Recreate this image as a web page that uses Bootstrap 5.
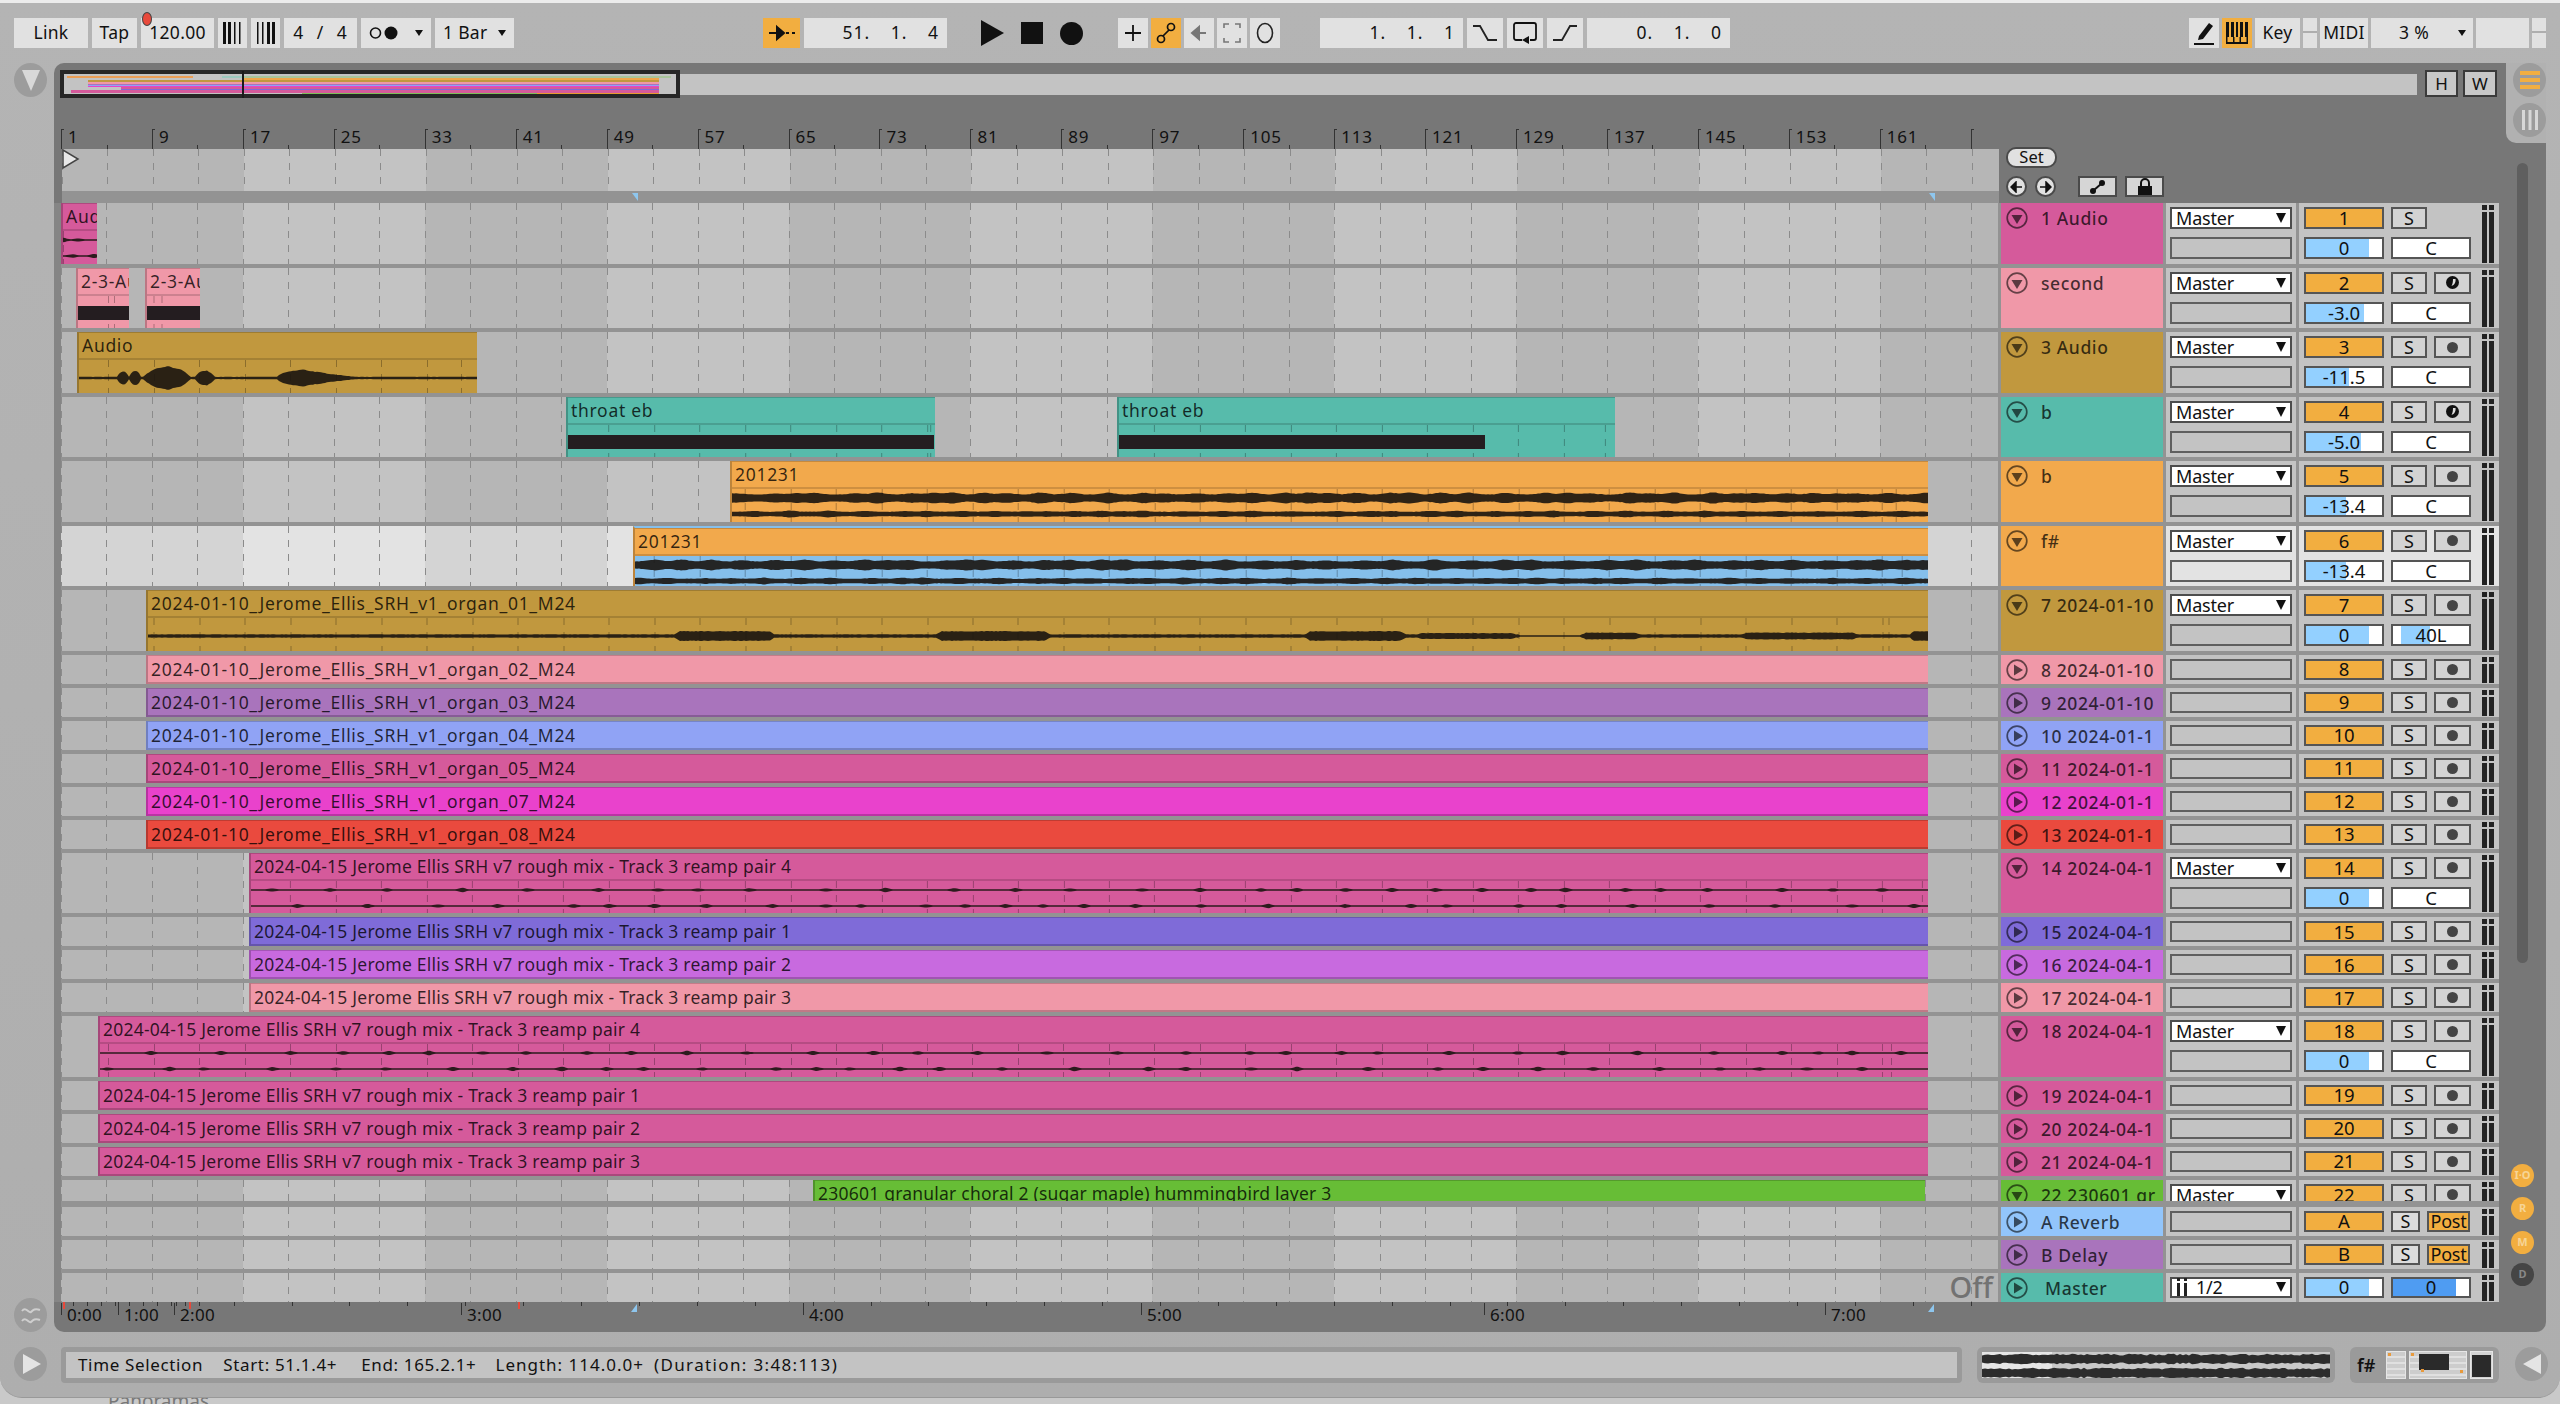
<!DOCTYPE html>
<html lang="en">
<head>
<meta charset="UTF-8">
<title>Ableton Live - Arrangement</title>
<link href="https://cdn.jsdelivr.net/npm/bootstrap@5.3.0/dist/css/bootstrap.min.css" rel="stylesheet">
<style>
:root { --orange:#f2ae40; --lane-d:#b6b6b6; --lane-l:#c3c3c3; --sep:#939393; --panel:#777; --edge:#5a5a5a; }
html, body { margin:0; background:#c9c9c9; }
body { width:2560px; height:1404px; overflow:hidden; font-family:"Noto Sans","Liberation Sans",sans-serif; font-size:16px; color:#111; }
.live-win { width:2560px; height:1398px; background:linear-gradient(#b4b4b4,#aeaeae); border-top:3px solid #ececec; border-radius:0 0 22px 22px; border-bottom:1px solid #999; }
.under-win { height:6px; overflow:hidden; padding-left:108px; color:#777; font-size:19px; line-height:6px; }

/* toolbar */
.tool-row { height:60px; padding:15px 14px 0; gap:4px; }
.tb { height:30px; background:#e1e1e1; font-size:17.5px; letter-spacing:.3px; line-height:1; white-space:nowrap; }
.tb.on { background:var(--orange); }
.tb-bare { height:30px; }
.w14{width:14px}.w29{width:29px}.w30{width:30px}.w36{width:36px}.w37{width:37px}.w45{width:45px}.w48{width:48px}.w53{width:53px}.w70{width:70px}.w73{width:73px}.w74{width:74px}.w79{width:79px}.w102{width:102px}.w143{width:143px}
.gap-t3 { gap:3px; }
.gap-t17 { gap:17px; }
.mono-pos { word-spacing:15px; letter-spacing:1px; }
.mono-pos.tight { word-spacing:7px; }
.pos-r { justify-content:flex-end; padding-right:8px; }
.pct-sel { padding:0 7px 0 28px; }
.split-v { background:linear-gradient(#e1e1e1 0 13px,#aeaeae 13px 15px,#e1e1e1 15px); }
.ml-follow { margin-left:245px; }
.ml-play { margin-left:30px; }
.ml-edit { margin-left:31px; }
.ml-loop { margin-left:36px; }
.tempo-dot { position:absolute; left:1px; top:-6px; width:10px; height:14px; border-radius:50%; background:#e8493b; border:1px solid #444; }
.caret-dn { width:0; height:0; border-left:4px solid transparent; border-right:4px solid transparent; border-top:6px solid #111; }

/* main */
.main-row { height:1269px; }
.side-left { width:54px; padding-left:14px; flex:none; }
.round-tog { width:33px; height:34px; border-radius:50%; background:#9c9c9c; }
.arr-panel { width:2492px; height:1269px; background:var(--panel); border-radius:10px 0 10px 10px; position:relative; overflow:hidden; }
.notch { position:absolute; right:0; top:0; width:40px; height:80px; background:#b1b1b1; border-bottom-left-radius:10px; z-index:3; }
.notch-btn { position:absolute; left:7px; }
.notch-btn.a { top:0; } .notch-btn.b { top:40px; }
.scroll-tr { position:absolute; left:2463px; top:100px; width:11px; height:800px; background:#5f5f5f; border-radius:6px; }
.ovw { margin:11px 0 0 7px; width:2356px; height:21px; background:var(--lane-l); position:relative; }
.ovw-frame { position:absolute; left:-1px; top:-4px; width:620px; height:28px; border:4px solid #262626; }
.ovw-cursor { position:absolute; left:181px; top:-3px; width:2px; height:27px; background:#1a1a1a; }
.zoom-tog { position:absolute; top:7px; height:27px; border:2px solid #3a3a3a; background:#c8c8c8; font-size:17px; }
.tg-h { left:2371px; width:33px; } .tg-w { left:2409px; width:34px; }

.rul-top { margin:0 0 0 7px; width:1937px; height:54px; overflow:hidden; }
.bar-cell { width:90.95px; flex:none; height:24px; position:relative; padding-left:7px; font-size:17px; letter-spacing:.8px; line-height:24px; color:#111; }
.bar-cell::before { content:""; position:absolute; left:0; top:4px; height:20px; width:3px; border-left:1px solid #333; border-top:1px solid #333; }
.bar-cell::after { content:""; position:absolute; left:45.5px; top:20px; height:4px; border-left:1px solid #333; }

.head-band { height:54px; }
.lane { width:1937px; flex:none; position:relative; overflow:hidden; background:repeating-linear-gradient(90deg,var(--lane-d) 0 181.9px,var(--lane-l) 181.9px 363.8px); }
.lane.sel { background:repeating-linear-gradient(90deg,#d4d4d4 0 181.9px,#e3e3e3 181.9px 363.8px); }
.lane::before, .clip-body::before { content:""; position:absolute; inset:0; background:repeating-linear-gradient(90deg,#8b8b8b 0 1px,transparent 1px 45.475px); -webkit-mask-image:repeating-linear-gradient(180deg,#000 0 7px,transparent 7px 14px); mask-image:repeating-linear-gradient(180deg,#000 0 7px,transparent 7px 14px); }
.clip-body::before { background:repeating-linear-gradient(90deg,rgba(0,0,0,.28) 0 1px,transparent 1px 45.475px); background-position-x:var(--grid-x); }
.marker-lane { height:42px; }
.start-arrow { position:absolute; left:0; top:0; }
.strip { width:1937px; height:12px; background:var(--sep); position:relative; }
.blue-tri { position:absolute; width:0; height:0; border-top:8px solid #8ec6ee; border-left:6px solid transparent; }
.blue-tri.up { border-top:0; border-bottom:8px solid #8ec6ee; }
.set-col { margin-left:7px; width:158px; }
.set-btn { width:51px; height:21px; border-radius:10px; background:#e1e1e1; border:2px solid #4a4a4a; font-size:16.5px; line-height:1; margin-top:-2px; }
.nav-dot { width:21px; height:21px; border-radius:50%; background:#e1e1e1; border:2px solid #4a4a4a; }
.sq-btn { width:39px; height:21px; background:#d6d6d6; border:2px solid #4a4a4a; }

.trk-wrap { border-left:7px solid #858585; width:2445px; background:var(--sep); }
.trk-scroll { height:998px; overflow:hidden; }
.trk { gap:3px; margin-bottom:4px; }
.trk.tall { height:60.5px; }
.trk.small { height:29px; }
.trk-last { margin-bottom:0; }
.trk-sep { height:5px; margin-bottom:.5px; }
.trk-head { width:162px; flex:none; padding:4px 0 0 5px; gap:13px; color:rgba(0,0,0,.72); font-size:17.5px; letter-spacing:.6px; font-weight:500; line-height:22px; white-space:nowrap; overflow:hidden; }
.trk-head.master-nm span { padding-left:4px; }
.fold { width:22px; height:22px; flex:none; display:block; }
.trk-route { width:130px; flex:none; background:var(--lane-l); padding:4px; gap:8px; }
.trk-route.sel, .trk-mix.sel { background:#e3e3e3; }
.sel-box { height:22px; flex:none; border:2px solid #5f5f5f; }
.small .sel-box { height:21px; }
.sel-box.white { background:#fff; border-color:#4d4d4d; padding:0 4px; font-size:18px; letter-spacing:-.2px; line-height:16px; }
.caret-sel { width:0; height:0; border-left:5px solid transparent; border-right:5px solid transparent; border-top:10px solid #111; }
.trk-mix { width:200px; flex:none; background:var(--lane-l); padding:4px 5px 0; }
.mix-col { gap:8px; flex:none; width:167px; }
.mix-line { gap:7px; height:22px; }
.small .mix-line { height:21px; }
.num-btn { width:80px; background:var(--orange); border:2px solid #555; font-size:18.5px; line-height:16px; }
.s-btn { width:36px; background:#d3d3d3; border:2px solid #555; font-size:18px; line-height:16px; }
.s-btn.nar { width:29px; background:#dcdcdc; }
.rec-btn { width:37px; background:#d3d3d3; border:2px solid #555; }
.rec-btn.post { width:43px; background:var(--orange); font-size:18px; letter-spacing:-.2px; line-height:16px; }
.rec-dot { width:11px; height:11px; border-radius:50%; background:#444; }
.val-box { width:80px; background:#fff; border:2px solid #555; font-size:18.5px; line-height:16px; position:relative; }
.val-fill { position:absolute; top:0; bottom:0; left:0; background:#93d0ff; }
.val-fill.deep { background:#4f9cf2; }
.val-txt { position:relative; }
.mtr { width:12px; flex:none; gap:2px; margin-left:11px; margin-top:-2px; height:calc(100% + 1px); }
.mtr-ch { width:5px; gap:2px; }
.mtr-a { height:5px; background:#222; }
.mtr-b { flex:1; background:#222; }

/* clips */
.clip { position:absolute; top:0; bottom:0; border-left:2px solid rgba(0,0,0,.22); box-shadow:inset 0 1px rgba(0,0,0,.18); z-index:1; overflow:hidden; }
.clip.blue-top { border-top:2px solid #85bfeb; }
.clip-title { height:28px; padding-left:3px; font-size:17.5px; letter-spacing:.7px; line-height:27px; color:rgba(0,0,0,.78); white-space:nowrap; overflow:hidden; border-bottom:2px solid rgba(0,0,0,.15); }
.clip-title.narrow { letter-spacing:.22px; }
.small .clip-title { height:29px; line-height:28px; border-bottom:2px solid rgba(0,0,0,.2); }
.clip-body { position:absolute; left:0; right:0; top:28px; bottom:0; }
.clip-svg { position:absolute; left:0; top:0; display:block; }
.clip-bar { position:absolute; left:0; top:10px; height:14px; }
.off-lbl { position:absolute; right:5px; bottom:1px; font-size:29px; line-height:1; color:#727272; z-index:2; font-weight:500; }

.rul-bot { height:30px; margin-left:7px; width:1937px; position:relative; overflow:hidden; background:repeating-linear-gradient(90deg,transparent 0 56.9px,#333 56.9px 57.9px) 0 0/100% 4px no-repeat; }
.tm { position:absolute; top:1px; font-size:17px; letter-spacing:.3px; line-height:1; padding:3px 0 0 6px; }
.tm::before { content:""; position:absolute; left:0; top:0; height:12px; border-left:1px solid #333; }
.red-tick { position:absolute; top:0; width:2px; height:7px; background:#e8493b; }
.mini-tick { position:absolute; top:0; width:1px; height:4px; background:#333; }
.ctl { position:absolute; width:23px; height:23px; border-radius:50%; background:var(--orange); color:#f7d596; font-size:11px; font-weight:700; z-index:4; left:2457px; }
.ctl.off { background:#454545; color:#888; }

/* status */
.stat-row { height:36px; margin-top:15px; position:relative; }
.stat-box { width:1901px; height:36px; border:5px solid #9a9a9a; border-radius:4px; background:var(--lane-l); padding-left:12px; font-size:17px; letter-spacing:.65px; margin-left:7px; white-space:nowrap; }
.st-a { margin-right:20px; } .st-b { margin-right:24px; } .st-c { margin-right:19px; } .st-d { margin-right:10px; letter-spacing:1px; } .st-e { letter-spacing:1.35px; }
.prev-box { width:358px; height:36px; margin-left:15px; background:#9a9a9a; border-radius:6px; padding:5px; }
.prev-in { width:348px; height:26px; background:linear-gradient(90deg,#e6e6e6 0 70px,#c9c9c9 70px); display:block; }
.dev-box { width:149px; height:36px; margin-left:15px; background:#9a9a9a; border-radius:6px; padding:4px 6px 4px 7px; gap:3px; font-size:18px; font-weight:600; }
.dev-nm { width:23px; margin-right:4px; }
.dev-thumb { height:28px; background:repeating-linear-gradient(#cdcdcd 0 4px,#e0e0e0 4px 6px); border:1px solid #e6e6e6; position:relative; }
.dev-thumb.a { width:21px; } .dev-thumb.b { width:62px; } .dev-thumb.c { width:24px; background:#d4d4d4; }
.dev-scr { position:absolute; background:#2a2a2a; }
.dev-scr.b1 { left:9px; width:30px; top:2px; bottom:8px; }
.dev-scr.c1 { left:1px; right:1px; top:3px; bottom:1px; }
.dev-dot { position:absolute; width:3px; height:3px; background:#e89a3c; }
.dev-dot.p1 { left:1px; top:1px; } .dev-dot.p2 { left:11px; top:17px; } .dev-dot.p3 { right:3px; top:18px; }
</style>
</head>
<body>
<div class="live-win d-flex flex-column">

  <div class="tool-row d-flex align-items-start">
    <div class="tb w74 d-flex align-items-center justify-content-center">Link</div>
    <div class="tb w45 d-flex align-items-center justify-content-center">Tap</div>
    <div class="tb w73 d-flex align-items-center justify-content-center position-relative"><span class="tempo-dot"></span>120.00</div>
    <div class="tb w29 d-flex align-items-center justify-content-center"><svg width="22" height="24"><path d="M1 1h3v22H1zM6 1h3v22H6z" fill="#111"/><path d="M12 1h1.500v22H12zM17 1h1.500v22H17z" fill="#111"/></svg></div>
    <div class="tb w29 d-flex align-items-center justify-content-center"><svg width="22" height="24"><path d="M2 1h1.500v22H2zM7 1h1.500v22H7z" fill="#111"/><path d="M12 1h3v22h-3zM17 1h3v22h-3z" fill="#111"/></svg></div>
    <div class="tb w73 d-flex align-items-center justify-content-center mono-pos tight">4 / 4</div>
    <div class="tb w70 d-flex align-items-center justify-content-between px-2"><svg width="30" height="18"><circle cx="6.500" cy="9" r="5" fill="none" stroke="#111" stroke-width="1.600"/><circle cx="22" cy="9" r="6.500" fill="#111"/></svg><span class="caret-dn"></span></div>
    <div class="tb w79 d-flex align-items-center justify-content-between px-2">1 Bar<span class="caret-dn"></span></div>

    <div class="tb on w37 d-flex align-items-center justify-content-center ml-follow"><svg width="28" height="18"><path d="M1 9h11M9 3l7 6-7 6z" stroke="#111" stroke-width="2" fill="#111"/><path d="M18 9h3M24 9h3" stroke="#111" stroke-width="2"/></svg></div>
    <div class="tb w143 d-flex align-items-center pos-r mono-pos">51. 1. 4</div>

    <div class="tb-bare d-flex align-items-center gap-t17 ml-play">
      <svg width="23" height="26"><path d="M0 0l23 13L0 26z" fill="#111"/></svg>
      <svg width="22" height="22"><rect width="22" height="22" fill="#111"/></svg>
      <svg width="23" height="23"><circle cx="11.500" cy="11.500" r="11.500" fill="#111"/></svg>
    </div>

    <div class="d-flex gap-t3 ml-edit">
      <div class="tb w30 d-flex align-items-center justify-content-center"><svg width="18" height="18"><path d="M9 1v16M1 9h16" stroke="#111" stroke-width="1.800"/></svg></div>
      <div class="tb on w30 d-flex align-items-center justify-content-center"><svg width="20" height="24"><circle cx="5" cy="18" r="3.500" fill="none" stroke="#111" stroke-width="1.700"/><circle cx="15" cy="6" r="3.500" fill="none" stroke="#111" stroke-width="1.700"/><path d="M7 15l6-6" stroke="#111" stroke-width="1.700"/></svg></div>
      <div class="tb w30 d-flex align-items-center justify-content-center"><svg width="18" height="18"><path d="M16 9H7M9 3L2 9l7 6z" stroke="#777" stroke-width="2" fill="#777"/></svg></div>
      <div class="tb w30 d-flex align-items-center justify-content-center"><svg width="18" height="20"><path d="M1 5V1h5M12 1h5v4M17 15v4h-5M6 19H1v-4" fill="none" stroke="#777" stroke-width="1.600"/></svg></div>
      <div class="tb w30 d-flex align-items-center justify-content-center"><svg width="18" height="22"><ellipse cx="9" cy="11" rx="7.500" ry="9.500" fill="none" stroke="#222" stroke-width="1.600"/></svg></div>
    </div>

    <div class="tb w143 d-flex align-items-center pos-r mono-pos ml-loop">1. 1. 1</div>
    <div class="tb w36 d-flex align-items-center justify-content-center"><svg width="26" height="20"><path d="M1 3h7l8 14h9" fill="none" stroke="#222" stroke-width="1.800"/></svg></div>
    <div class="tb w36 d-flex align-items-center justify-content-center"><svg width="26" height="24"><path d="M10 19H4a2 2 0 0 1-2-2V4a2 2 0 0 1 2-2h18a2 2 0 0 1 2 2v13a2 2 0 0 1-2 2h-4" fill="none" stroke="#111" stroke-width="1.800"/><path d="M17 15v8l-7-4z" fill="#111"/></svg></div>
    <div class="tb w36 d-flex align-items-center justify-content-center"><svg width="26" height="20"><path d="M1 17h9l8-14h7" fill="none" stroke="#222" stroke-width="1.800"/></svg></div>
    <div class="tb w143 d-flex align-items-center pos-r mono-pos">0. 1. 0</div>

    <div class="d-flex gap-t3 ms-auto">
      <div class="tb w30 d-flex align-items-center justify-content-center"><svg width="22" height="26"><path d="M6 16L16 3l4 3-10 13-5 1z" fill="#111"/><path d="M1 24h20" stroke="#111" stroke-width="2"/></svg></div>
      <div class="tb on w30 d-flex align-items-center justify-content-center"><svg width="24" height="24"><rect x="1" y="1" width="22" height="22" fill="#111"/><path d="M4 1h2v15H4zM9 1h2v15H9zM13 1h2v15h-2zM18 1h2v15h-2z" fill="#f2ae40"/><path d="M2.500 16h19v5h-19z" fill="#f2ae40"/><path d="M8 16h1.500v6H8zM14.500 16H16v6h-1.500z" fill="#111"/></svg></div>
      <div class="tb w45 d-flex align-items-center justify-content-center">Key</div>
      <div class="tb split-v w14"></div>
      <div class="tb w48 d-flex align-items-center justify-content-center">MIDI</div>
      <div class="tb w102 d-flex align-items-center justify-content-between pct-sel">3 %<span class="caret-dn"></span></div>
      <div class="tb w53"></div>
      <div class="tb split-v w14"></div>
    </div>
  </div>

  <div class="main-row d-flex">
    <div class="side-left d-flex flex-column justify-content-between">
      <div class="round-tog d-flex align-items-center justify-content-center"><svg width="22" height="24"><path d="M2 2h18l-9 21z" fill="#d8d8d8"/></svg></div>
      <div class="round-tog d-flex align-items-center justify-content-center"><svg width="24" height="22"><path d="M3 7c4-5 7 3 9 1s4-4 9-2M3 17c4-5 7 3 9 1s4-4 9-2" fill="none" stroke="#cfcfcf" stroke-width="2"/></svg></div>
    </div>

    <div class="arr-panel">
      <div class="notch">
        <div class="round-tog notch-btn a d-flex align-items-center justify-content-center"><svg width="20" height="22"><path d="M0 2h20v4H0zM0 9h20v4H0zM0 16h20v4H0z" fill="#f2ae40"/></svg></div>
        <div class="round-tog notch-btn b d-flex align-items-center justify-content-center"><svg width="20" height="22"><path d="M2 1h3v20H2zM8.500 1h3v20h-3zM15 1h3v20h-3z" fill="#d8d8d8"/></svg></div>
      </div>
      <div class="scroll-tr"></div>

      <div class="ovw">
        <svg width="610" height="21" class="position-absolute top-0 start-0" viewBox="0 0 610 21">
          <rect x="6" y="2" width="126" height="2" fill="#ea9e56"/><rect x="161" y="2" width="20" height="2" fill="#9cc8bd"/><rect x="183" y="2" width="430" height="2" fill="#a8c49a"/>
          <rect x="182" y="4" width="416" height="2" fill="#efa54a"/><rect x="27" y="6" width="571" height="2" fill="#c1983e"/><rect x="27" y="8" width="571" height="2" fill="#f098a8"/>
          <rect x="27" y="10" width="571" height="1" fill="#a974bc"/><rect x="27" y="11" width="571" height="1" fill="#90a3f5"/><rect x="27" y="12" width="571" height="1" fill="#e942cc"/>
          <rect x="60" y="13" width="538" height="2" fill="#d55a9b"/><rect x="60" y="15" width="538" height="1" fill="#7f6bd8"/><rect x="10" y="16" width="588" height="3" fill="#d55a9b"/>
          <rect x="241" y="19" width="235" height="2" fill="#7fbf5a"/><rect x="476" y="19" width="122" height="2" fill="#e99a2f"/>
        </svg>
        <div class="ovw-frame"></div>
        <div class="ovw-cursor"></div>
      </div>
      <div class="zoom-tog tg-h d-flex align-items-center justify-content-center">H</div>
      <div class="zoom-tog tg-w d-flex align-items-center justify-content-center">W</div>

      <div class="rul-top d-flex align-items-end" id="rulerTop"></div>

      <div class="d-flex head-band ms-0">
        <div class="trk-band-left">
          <div class="lane marker-lane ms-2 position-relative" id="markerLane"><svg class="start-arrow" width="18" height="20"><path d="M1 1v18l15-9z" fill="#e8e8e8" stroke="#444" stroke-width="1.500"/></svg></div>
          <div class="strip ms-2" id="topStrip"><span class="blue-tri" style="left:570px;top:2px"></span><span class="blue-tri" style="left:1867px;top:2px"></span></div>
        </div>
        <div class="set-col d-flex flex-column gap-2">
          <div class="set-btn d-flex align-items-center justify-content-center">Set</div>
          <div class="d-flex align-items-center">
            <div class="nav-dot d-flex align-items-center justify-content-center me-2"><svg width="13" height="12"><path d="M12 6H5M6 1L1 6l5 5z" stroke="#111" stroke-width="1.500" fill="#111"/></svg></div>
            <div class="nav-dot d-flex align-items-center justify-content-center"><svg width="13" height="12"><path d="M1 6h7M7 1l5 5-5 5z" stroke="#111" stroke-width="1.500" fill="#111"/></svg></div>
            <div class="sq-btn d-flex align-items-center justify-content-center ms-auto me-2"><svg width="18" height="16"><circle cx="4" cy="12" r="3" fill="#111"/><circle cx="13" cy="4" r="3" fill="#111"/><path d="M5 11l7-6" stroke="#111" stroke-width="2"/></svg></div>
            <div class="sq-btn d-flex align-items-center justify-content-center"><svg width="16" height="17"><path d="M4 8V5a4 4 0 0 1 8 0v3" fill="none" stroke="#111" stroke-width="2"/><rect x="1" y="8" width="14" height="9" fill="#111"/></svg></div>
          </div>
        </div>
      </div>

      <div class="trk-wrap">
        <div class="trk-scroll" id="trackList"></div>
        <div class="trk-sep"></div>
        <div id="returnList"></div>
      </div>

      <div class="rul-bot" id="rulerBot"></div>

      <div class="ctl d-flex align-items-center justify-content-center" style="top:1101px">I·O</div>
      <div class="ctl d-flex align-items-center justify-content-center" style="top:1134px">R</div>
      <div class="ctl d-flex align-items-center justify-content-center" style="top:1168px">M</div>
      <div class="ctl off d-flex align-items-center justify-content-center" style="top:1200px">D</div>
    </div>
  </div>

  <div class="stat-row d-flex">
    <div class="side-left"><div class="round-tog d-flex align-items-center justify-content-center"><svg width="22" height="24"><path d="M3 2l18 10L3 22z" fill="#e4e4e4"/></svg></div></div>
    <div class="stat-box d-flex align-items-center"><span class="st-a">Time Selection</span><span class="st-b">Start: 51.1.4+</span><span class="st-c">End: 165.2.1+</span><span class="st-d">Length: 114.0.0+</span><span class="st-e">(Duration: 3:48:113)</span></div>
    <div class="prev-box"><svg class="prev-in" id="prevWave" viewBox="0 0 348 26"></svg></div>
    <div class="dev-box d-flex align-items-center"><span class="dev-nm">f#</span><div class="dev-thumb a"><span class="dev-dot p1"></span></div><div class="dev-thumb b"><span class="dev-scr b1"></span><span class="dev-dot p1"></span><span class="dev-dot p2"></span><span class="dev-dot p3"></span></div><div class="dev-thumb c"><span class="dev-scr c1"></span></div></div>
    <div class="ms-3"><div class="round-tog d-flex align-items-center justify-content-center"><svg width="22" height="24"><path d="M20 2L2 12l18 10z" fill="#e4e4e4"/></svg></div></div>
  </div>
</div>
<div class="under-win">Panoramas</div>

<script>
// palette taken from the track colours
const C = { pink:'#d55a9b', rose:'#f098a8', gold:'#c1983e', teal:'#57bbab', orange:'#f2a94c', purple:'#a974bc', peri:'#90a3f5', hot:'#e942cc', red:'#ea4a3e', violet:'#7f6bd8', orchid:'#c86adf', green:'#67bd36', sky:'#92c5fb' };
const ORG = n => `2024-01-10_Jerome_Ellis_SRH_v1_organ_${n}_M24`;
const ROUGH = n => `2024-04-15 Jerome Ellis SRH v7 rough mix - Track 3 reamp pair ${n}`;
const END = 1928;

const tracks = [
  { name:'1 Audio', c:C.pink, tall:1, num:'1', vol:83, val:'0', noRec:1, clips:[{x:61,e:97,t:'Aud',w:'thin2',every:18}] },
  { name:'second', c:C.rose, tall:1, num:'2', vol:76, val:'-3.0', half:1, clips:[{x:76,e:129,t:'2-3-Au',w:'bar',bw:53},{x:145,e:200,t:'2-3-Au',w:'bar',bw:55}] },
  { name:'3 Audio', c:C.gold, tall:1, num:'3', vol:57, val:'-11.5', clips:[{x:77,e:477,t:'Audio',w:'mono',base:1.3,blobs:[[38,50,7,0],[50,62,8,0],[64,112,12,0],[116,136,8,0],[198,300,9,.25]]}] },
  { name:'b', c:C.teal, tall:1, num:'4', vol:72, val:'-5.0', half:1, clips:[{x:566,e:935,t:'throat eb',w:'bar',bw:366},{x:1117,e:1615,t:'throat eb',w:'bar',bw:366}] },
  { name:'b', c:C.orange, tall:1, num:'5', vol:53, val:'-13.4', clips:[{x:730,e:END,t:'201231',w:'stereo'}] },
  { name:'f#', c:C.orange, tall:1, num:'6', vol:53, val:'-13.4', sel:1, clips:[{x:633,e:END,t:'201231',w:'stereo',body:'#85bfeb'}] },
  { name:'7 2024-01-10', c:C.gold, tall:1, num:'7', vol:83, val:'0', pan:'40L', clips:[{x:146,e:END,t:ORG('01'),w:'mono',base:1.8,thin:[1372,1433],blobs:[[524,629,5,-1],[785,905,5,-1],[1155,1260,5,-1],[1266,1372,3,-1],[1433,1493,3.5,-1],[1590,1714,3.5,-1],[1763,1782,5,-1]]}] },
  { name:'8 2024-01-10', c:C.rose, num:'8', clips:[{x:146,e:END,t:ORG('02')}] },
  { name:'9 2024-01-10', c:C.purple, num:'9', clips:[{x:146,e:END,t:ORG('03')}] },
  { name:'10 2024-01-1', c:C.peri, num:'10', clips:[{x:146,e:END,t:ORG('04')}] },
  { name:'11 2024-01-1', c:C.pink, num:'11', clips:[{x:146,e:END,t:ORG('05')}] },
  { name:'12 2024-01-1', c:C.hot, num:'12', clips:[{x:146,e:END,t:ORG('07')}] },
  { name:'13 2024-01-1', c:C.red, num:'13', clips:[{x:146,e:END,t:ORG('08')}] },
  { name:'14 2024-04-1', c:C.pink, tall:1, num:'14', vol:83, val:'0', clips:[{x:249,e:END,t:ROUGH(4),w:'thin2',every:55}] },
  { name:'15 2024-04-1', c:C.violet, num:'15', clips:[{x:249,e:END,t:ROUGH(1)}] },
  { name:'16 2024-04-1', c:C.orchid, num:'16', clips:[{x:249,e:END,t:ROUGH(2)}] },
  { name:'17 2024-04-1', c:C.rose, num:'17', clips:[{x:249,e:END,t:ROUGH(3)}] },
  { name:'18 2024-04-1', c:C.pink, tall:1, num:'18', vol:83, val:'0', clips:[{x:98,e:END,t:ROUGH(4),w:'thin2',every:55}] },
  { name:'19 2024-04-1', c:C.pink, num:'19', clips:[{x:98,e:END,t:ROUGH(1)}] },
  { name:'20 2024-04-1', c:C.pink, num:'20', clips:[{x:98,e:END,t:ROUGH(2)}] },
  { name:'21 2024-04-1', c:C.pink, num:'21', clips:[{x:98,e:END,t:ROUGH(3)}] },
  { name:'22 230601 gr', c:C.green, tall:1, num:'22', vol:83, val:'0', clips:[{x:813,e:1925,t:'230601 granular choral 2 (sugar maple) hummingbird layer 3'}] }
];
const returns = [
  { name:'A Reverb', c:C.sky, num:'A', post:1 },
  { name:'B Delay', c:C.purple, num:'B', post:1 },
  { name:'Master', c:C.teal, master:1 }
];

// small seeded random so the waveforms come out the same every run
let seed = 7;
const rnd = () => { seed = (seed * 16807) % 2147483647; return seed / 2147483647; };

function chan(w, cy, ampAt, step) {
  let up = '', dn = '';
  for (let x = 0; x <= w; x += step) {
    const a = ampAt(x);
    up += `L${x} ${(cy - a).toFixed(1)}`;
    dn = `L${x} ${(cy + a).toFixed(1)}` + dn;
  }
  return 'M' + up.slice(1) + dn + 'Z';
}

// random soft bumps, used for the busy stereo clips and the quiet reamp clips
function bumps(w, every, height, width) {
  const list = [];
  for (let x = every * rnd(); x < w; x += every * (.6 + .8 * rnd())) list.push([x, height * (.5 + .5 * rnd())]);
  return x => {
    let a = 0;
    for (const b of list) { const d = (x - b[0]) / width; if (Math.abs(d) < 3) a += b[1] * Math.exp(-d * d); }
    return a;
  };
}

function blobAmp(cl) {
  return x => {
    if (cl.thin && x >= cl.thin[0] && x <= cl.thin[1]) return .7;
    let a = cl.base * (.85 + .15 * rnd());
    for (const b of cl.blobs) {
      if (x < b[0] || x > b[1]) continue;
      const p = (x - b[0]) / (b[1] - b[0]);
      let env;
      if (b[3] === -1) env = Math.min(1, Math.min(p, 1 - p) * 14);
      else if (b[3]) env = p < b[3] ? (p / b[3]) ** .4 : (1 - (p - b[3]) / (1 - b[3])) ** 1.6;
      else env = Math.sin(p * Math.PI) ** .7;
      a = Math.max(a, b[2] * env * (.88 + .12 * rnd()));
    }
    return a;
  };
}

function clipBody(cl, w) {
  if (!cl.w) return '';
  let inner = '';
  const ink = 'rgba(25,20,15,.9)';
  if (cl.w === 'bar') {
    inner = `<div class="clip-bar" style="width:${cl.bw}px;background:#241d20"></div>`;
  } else {
    let d = '';
    if (cl.w === 'mono') {
      d = chan(w, 18, blobAmp(cl), 2);
    } else if (cl.w === 'stereo') {
      const top = bumps(w, 30, 2, 9), bot = bumps(w, 32, 1.1, 8);
      d = chan(w, 9, x => Math.min(6.2, 3.3 + top(x) + .4 * rnd()), 2) + chan(w, 25, x => Math.min(4, 2.1 + bot(x) + .3 * rnd()), 2);
    } else {
      const b1 = bumps(w, cl.every, 1.6, 4), b2 = bumps(w, cl.every, 1.6, 4);
      d = chan(w, 9, x => .7 + b1(x), 2) + chan(w, 25, x => .7 + b2(x), 2);
    }
    inner = `<svg class="clip-svg" width="${w}" height="33" viewBox="0 0 ${w} 33"><path d="${d}" fill="${ink}"/></svg>`;
  }
  const bg = cl.body ? `background:${cl.body};` : '';
  return `<div class="clip-body" style="${bg}--grid-x:${((-(cl.x - 61)) % 45.475).toFixed(1)}px">${inner}</div>`;
}

function fold(open) {
  const tri = open ? 'M5.500 8h11L11 17z' : 'M8 5.500l9 5.500-9 5.500z';
  return `<svg class="fold" viewBox="0 0 22 22"><circle cx="11" cy="11" r="9.800" fill="none" stroke="rgba(0,0,0,.58)" stroke-width="1.700"/><path d="${tri}" fill="rgba(0,0,0,.62)"/></svg>`;
}

function meter() {
  const ch = '<div class="mtr-ch d-flex flex-column"><div class="mtr-a"></div><div class="mtr-b"></div></div>';
  return `<div class="mtr d-flex">${ch}${ch}</div>`;
}

function recBtn(t) {
  if (t.noRec) return '';
  if (t.half) return '<div class="rec-btn d-flex align-items-center justify-content-center"><svg width="13" height="13"><circle cx="6.500" cy="6.500" r="6.500" fill="#111"/><path d="M7 3h2.500c.5 3-1 6-4 7 1-2 1.500-4 1.500-7z" fill="#ddd"/></svg></div>';
  return '<div class="rec-btn d-flex align-items-center justify-content-center"><span class="rec-dot"></span></div>';
}

function valBox(v, txt, deep) {
  return `<div class="val-box d-flex align-items-center justify-content-center"><span class="val-fill ${deep ? 'deep' : ''}" style="width:${v}%"></span><span class="val-txt">${txt}</span></div>`;
}

function rowHtml(t, i, last) {
  const size = t.tall ? 'tall' : 'small';
  const clips = (t.clips || []).map(cl => {
    const w = cl.e - cl.x;
    const nar = cl.t.length > 40 && cl.t.includes(' ') ? 'narrow' : '';
    return `<div class="clip ${cl.body ? 'blue-top' : ''}" style="left:${cl.x - 61}px;width:${w}px;background:${t.c}"><div class="clip-title ${nar}">${cl.t}</div>${clipBody(cl, w)}</div>`;
  }).join('');
  const route = t.master
    ? `<div class="sel-box white d-flex align-items-center justify-content-between"><span class="d-flex align-items-center gap-2"><svg width="12" height="18"><path d="M1 0h3v3H1zM8 0h3v3H8zM1 5h3v13H1zM8 5h3v13H8z" fill="#222"/></svg>1/2</span><span class="caret-sel"></span></div>`
    : (t.tall ? `<div class="sel-box white d-flex align-items-center justify-content-between">Master<span class="caret-sel"></span></div>` : '') + `<div class="sel-box"></div>`;
  let mix;
  if (t.master) {
    mix = `<div class="mix-line d-flex">${valBox(83,'0')}${valBox(83,'0',1)}</div>`;
  } else {
    const s = t.post ? 's-btn nar' : 's-btn';
    const right = t.post ? '<div class="rec-btn post d-flex align-items-center justify-content-center">Post</div>' : recBtn(t);
    mix = `<div class="mix-line d-flex"><div class="num-btn d-flex align-items-center justify-content-center">${t.num}</div><div class="${s} d-flex align-items-center justify-content-center">S</div>${right}</div>`;
    if (t.tall) {
      const pan = t.pan
        ? `<div class="val-box d-flex align-items-center justify-content-center"><span class="val-fill" style="left:10%;width:39%"></span><span class="val-txt">${t.pan}</span></div>`
        : '<div class="val-box d-flex align-items-center justify-content-center">C</div>';
      mix += `<div class="mix-line d-flex">${valBox(t.vol, t.val)}${pan}</div>`;
    }
  }
  return `<div class="trk ${size} d-flex ${last ? 'trk-last' : ''}">
    <div class="lane ${t.sel ? 'sel' : ''}">${clips}${t.master ? '<div class="off-lbl">Off</div>' : ''}</div>
    <div class="trk-head d-flex ${t.master ? 'master-nm' : ''}" style="background:${t.c}">${fold(t.tall)}<span>${t.name}</span></div>
    <div class="trk-route d-flex flex-column ${t.sel ? 'sel' : ''}">${route}</div>
    <div class="trk-mix d-flex ${t.sel ? 'sel' : ''}"><div class="mix-col d-flex flex-column">${mix}</div>${meter()}</div>
  </div>`;
}

document.getElementById('trackList').innerHTML = tracks.map((t, i) => rowHtml(t, i)).join('');
document.getElementById('returnList').innerHTML = returns.map((t, i) => rowHtml(t, i, i === 2)).join('');

// bar numbers every 8 bars
let bars = '';
for (let b = 1; b <= 169; b += 8) bars += `<div class="bar-cell">${b < 169 ? b : ''}</div>`;
document.getElementById('rulerTop').innerHTML = bars;

// time ruler along the bottom
const times = [['0:00',0],['1:00',57],['2:00',113],['3:00',400],['4:00',742],['5:00',1080],['6:00',1423],['7:00',1764]];
let tm = times.map(t => `<div class="tm" style="left:${t[1]}px">${t[0]}</div>`).join('');
[2, 128, 457].forEach(x => tm += `<span class="red-tick" style="left:${x}px"></span>`);
for (let x = 12; x < 150; x += 14) tm += `<span class="mini-tick" style="left:${x}px"></span>`;
[570, 1867].forEach(x => tm += `<span class="blue-tri up" style="left:${x}px;top:2px"></span>`);
document.getElementById('rulerBot').innerHTML = tm;

// master waveform in the status bar
const pv = () => 3.5 + 1.8 * rnd();
document.getElementById('prevWave').innerHTML = `<path d="${chan(348, 7, pv, 3) + chan(348, 21, pv, 3)}" fill="#2c2c2c"/>`;
</script>
<script src="https://cdn.jsdelivr.net/npm/bootstrap@5.3.0/dist/js/bootstrap.bundle.min.js"></script>
</body>
</html>
